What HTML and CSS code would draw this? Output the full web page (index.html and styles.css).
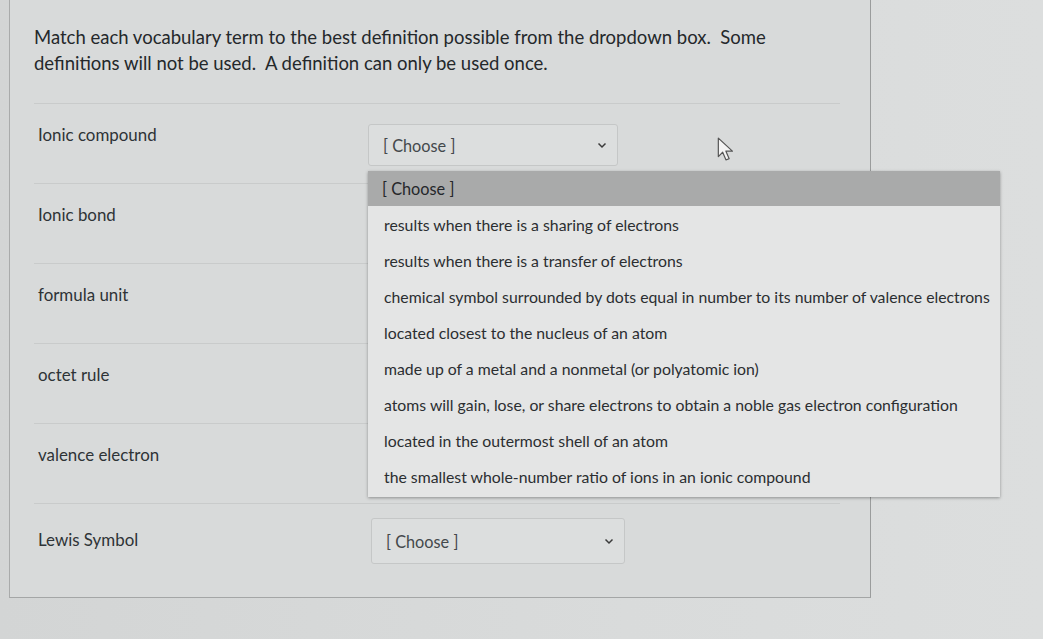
FILE: index.html
```html
<!DOCTYPE html>
<html>
<head>
<meta charset="utf-8">
<link rel="stylesheet" href="styles.css">
</head>
<body>
<div class="panel">
  <p class="question">Match each vocabulary term to the best definition possible from the dropdown box.&nbsp; Some definitions will not be used.&nbsp; A definition can only be used once.</p>
  <div class="rows">
    <div class="row">
      <div class="term">Ionic compound</div>
      <div class="select"><span>[ Choose ]</span><svg class="chev" width="10" height="7" viewBox="0 0 10 7"><path d="M1.5 1.5 L5 5 L8.5 1.5" fill="none" stroke="#3b3b3b" stroke-width="1.5"/></svg></div>
    </div>
    <div class="row"><div class="term">Ionic bond</div></div>
    <div class="row"><div class="term">formula unit</div></div>
    <div class="row"><div class="term">octet rule</div></div>
    <div class="row"><div class="term">valence electron</div></div>
    <div class="row">
      <div class="term lower">Lewis Symbol</div>
      <div class="select last"><span>[ Choose ]</span><svg class="chev" width="10" height="7" viewBox="0 0 10 7"><path d="M1.5 1.5 L5 5 L8.5 1.5" fill="none" stroke="#3b3b3b" stroke-width="1.5"/></svg></div>
    </div>
  </div>
  <ul class="popup">
    <li class="hl">[ Choose ]</li>
    <li>results when there is a sharing of electrons</li>
    <li>results when there is a transfer of electrons</li>
    <li>chemical symbol surrounded by dots equal in number to its number of valence electrons</li>
    <li>located closest to the nucleus of an atom</li>
    <li>made up of a metal and a nonmetal (or polyatomic ion)</li>
    <li>atoms will gain, lose, or share electrons to obtain a noble gas electron configuration</li>
    <li>located in the outermost shell of an atom</li>
    <li>the smallest whole-number ratio of ions in an ionic compound</li>
  </ul>
  <svg class="cursor" width="22" height="26" viewBox="0 0 20 24"><path d="M2 2 L2 19 L6 15 L9 22 L12 21 L9 14 L15 14 Z" fill="#f4f4f4" stroke="#555" stroke-width="1.1" stroke-linejoin="round"/></svg>
</div>
</body>
</html>
```
FILE: styles.css
```css
html, body {
  margin: 0;
  padding: 0;
}
body {
  width: 1043px;
  height: 639px;
  background: linear-gradient(90deg, #d3d5d5 0%, #d9dbdb 60%, #dcdede 100%);
  font-family: Lato, "Open Sans", sans-serif;
  color: #2f3437;
  overflow: hidden;
}
.panel {
  position: relative;
  margin-left: 9px;
  width: 862px;
  height: 598px;
  border-left: 1px solid #a9abab;
  border-right: 1px solid #9a9c9c;
  border-bottom: 1px solid #a4a6a6;
  background: #d8dada;
  box-sizing: border-box;
}
.question {
  margin: 0;
  width: 770px;
  padding: 24px 0 0 24px;
  font-size: 18.5px;
  line-height: 26px;
  color: #24282b;
}
.rows {
  margin: 27px 30px 0 24px;
}
.row {
  display: flex;
  height: 79px;
  border-top: 1px solid #c9cbcb;
}
.term {
  width: 330px;
  padding: 21px 0 0 4px;
  font-size: 16.9px;
  line-height: 20px;
  color: #2e3336;
}
.term.lower {
  padding-top: 26px;
}
.select {
  margin-top: 20px;
  width: 250px;
  height: 42px;
  box-sizing: border-box;
  border: 1px solid #c5c7c7;
  border-radius: 3px;
  background: #dcdede;
  display: flex;
  align-items: center;
  justify-content: space-between;
  padding: 0 10px 0 14px;
  font-size: 16.3px;
  color: #44494c;
}
.select.last {
  margin-top: 14px;
  height: 46px;
  width: 254px;
  margin-left: 3px;
}
.chev {
  display: block;
}
.popup {
  position: absolute;
  left: 358px;
  top: 171px;
  width: 632px;
  margin: 0;
  padding: 0 0 3px 0;
  list-style: none;
  background: #e4e5e5;
  box-shadow: 0 1px 3px rgba(0,0,0,0.35);
  font-size: 15.8px;
  color: #2b2e31;
}
.popup li {
  height: 36px;
  line-height: 38px;
  padding-left: 16px;
  white-space: nowrap;
}
.popup li.hl {
  height: 35px;
  line-height: 36px;
  padding-left: 14px;
  background: #a9aaaa;
  font-size: 16.3px;
  color: #25272a;
}
.cursor {
  position: absolute;
  left: 706px;
  top: 136px;
}
```
